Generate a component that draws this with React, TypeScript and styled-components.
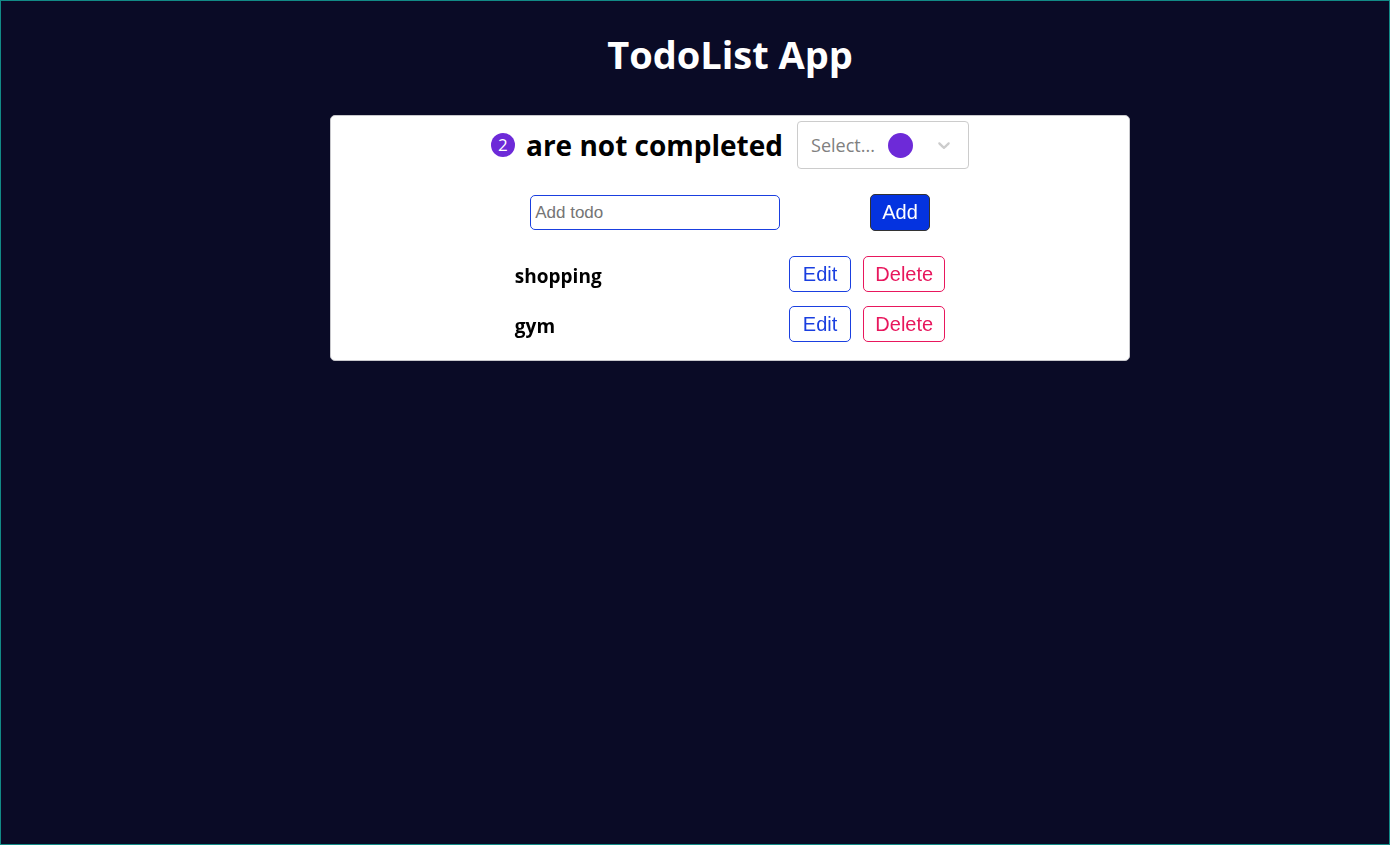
import React, { useState } from "react";
import styled, { createGlobalStyle } from "styled-components";

const GlobalStyle = createGlobalStyle`
  html, body {
    margin: 0;
    padding: 0;
    background: #0a0b26;
  }
  * { box-sizing: border-box; }
`;

const Page = styled.div`
  min-height: 100vh;
  height: 845px;
  border: 1px solid #128a86;
  padding-left: 70px;
  font-family: "Open Sans", "Noto Sans", sans-serif;
`;

const Title = styled.h1`
  margin: 0;
  padding-top: 28px;
  height: 114px;
  text-align: center;
  color: #ffffff;
  font-size: 38px;
  font-weight: 700;
  line-height: 50px;
`;

const Card = styled.div`
  width: 800px;
  margin: 0 auto;
  background: #ffffff;
  border: 1px solid #c8c8cc;
  border-radius: 5px;
  padding: 5px 0 18px;
  display: flex;
  flex-direction: column;
  align-items: center;
`;

const Header = styled.div`
  display: flex;
  align-items: center;
  justify-content: center;
  height: 48px;
`;

const Badge = styled.span`
  width: 24px;
  height: 24px;
  border-radius: 50%;
  background: #6d2ad8;
  color: #ffffff;
  font-size: 17px;
  line-height: 24px;
  text-align: center;
  margin-right: 11px;
  font-weight: 400;
`;

const Count = styled.h2`
  margin: 0 14px 0 0;
  font-size: 28px;
  font-weight: 700;
  color: #000000;
`;

const SelectBox = styled.div`
  width: 172px;
  height: 48px;
  border: 1px solid #cccccc;
  border-radius: 4px;
  display: flex;
  align-items: center;
  padding-left: 13px;
  padding-right: 14px;
`;

const Placeholder = styled.span`
  color: #808080;
  font-size: 18px;
`;

const Dot = styled.span`
  width: 25px;
  height: 25px;
  border-radius: 50%;
  background: #6d2ad8;
  margin-left: 13px;
`;

const Chevron = styled.svg`
  margin-left: auto;
  color: #cccccc;
`;

const Form = styled.form`
  display: flex;
  align-items: center;
  gap: 90px;
  margin-top: 25px;
`;

const Input = styled.input`
  width: 250px;
  height: 35px;
  border: 1px solid #1a3fe0;
  border-radius: 5px;
  padding: 0 4px;
  font-family: "Liberation Sans", Arial, sans-serif;
  font-size: 17px;
  outline: none;
  &::placeholder { color: #757575; }
`;

const Button = styled.button<{ $variant: "primary" | "edit" | "delete" }>`
  height: 36px;
  padding: 0 ${(p) => (p.$variant === "edit" ? "13px" : "11px")};
  border-radius: 5px;
  font-family: "Liberation Sans", Arial, sans-serif;
  font-size: 20px;
  cursor: pointer;
  background: ${(p) => (p.$variant === "primary" ? "#0433e0" : "#ffffff")};
  color: ${(p) =>
    p.$variant === "primary" ? "#ffffff" : p.$variant === "edit" ? "#1a3fe0" : "#e8175d"};
  border: 1px solid
    ${(p) =>
      p.$variant === "primary" ? "#333333" : p.$variant === "edit" ? "#1a3fe0" : "#e8175d"};
`;

const AddButton = styled(Button)`
  height: 37px;
  padding: 0 11px;
`;

const List = styled.ul`
  list-style: none;
  margin: 25px 0 0;
  padding: 0;
  display: flex;
  flex-direction: column;
  gap: 14px;
`;

const Row = styled.li`
  display: grid;
  grid-template-columns: 262px auto auto;
  column-gap: 12px;
  align-items: center;
`;

const Name = styled.span`
  font-size: 19px;
  font-weight: 700;
  color: #000000;
  padding-top: 4px;
`;

const Actions = styled.div`
  display: contents;
`;

export default function App() {
  const [todos] = useState(["shopping", "gym"]);
  return (
    <Page>
      <GlobalStyle />
      <Title>TodoList App</Title>
      <Card>
        <Header>
          <Badge>2</Badge>
          <Count>are not completed</Count>
          <SelectBox>
            <Placeholder>Select...</Placeholder>
            <Dot />
            <Chevron width="20" height="20" viewBox="0 0 20 20" fill="currentColor">
              <path d="M4.516 7.548c0.436-0.446 1.043-0.481 1.576 0l3.908 3.747 3.908-3.747c0.533-0.481 1.141-0.446 1.574 0 0.436 0.445 0.408 1.197 0 1.615-0.406 0.418-4.695 4.502-4.695 4.502-0.217 0.223-0.502 0.335-0.787 0.335s-0.57-0.112-0.789-0.335c0 0-4.287-4.084-4.695-4.502s-0.436-1.17 0-1.615z" />
            </Chevron>
          </SelectBox>
        </Header>
        <Form onSubmit={(e) => e.preventDefault()}>
          <Input placeholder="Add todo" autoFocus />
          <AddButton $variant="primary" type="submit">Add</AddButton>
        </Form>
        <List>
          {todos.map((t) => (
            <Row key={t}>
              <Name>{t}</Name>
              <Actions>
                <Button $variant="edit">Edit</Button>
                <Button $variant="delete">Delete</Button>
              </Actions>
            </Row>
          ))}
        </List>
      </Card>
    </Page>
  );
}
